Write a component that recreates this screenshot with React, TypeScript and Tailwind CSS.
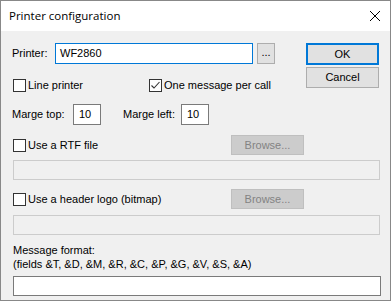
import { type ReactNode } from "react";

const bodyFont = { fontFamily: '"Liberation Sans", Arial, sans-serif' };
const titleFont = { fontFamily: '"Open Sans", "Noto Sans", sans-serif' };

function CheckBox({ checked, label }: { checked?: boolean; label: string }) {
  return (
    <label className="flex items-center h-[13px]">
      <span className="w-[13px] h-[13px] border border-[#333333] bg-white flex items-center justify-center shrink-0">
        {checked && (
          <svg width="11" height="11" viewBox="0 0 11 11">
            <path d="M1.5 5.5 L4 8 L9.5 2" fill="none" stroke="#333333" strokeWidth="1.1" />
          </svg>
        )}
      </span>
      <span className="ml-[2px] leading-none">{label}</span>
    </label>
  );
}

function Button({ children, variant }: { children: ReactNode; variant?: "default" | "disabled" }) {
  if (variant === "disabled") {
    return (
      <div className="w-[73px] h-[20px] bg-[#cccccc] border border-[#bfbfbf] text-[#838383] flex items-center justify-center">
        {children}
      </div>
    );
  }
  if (variant === "default") {
    return (
      <div className="w-[73px] h-[22px] bg-[#e1e1e1] border-2 border-[#0078d7] flex items-center justify-center">
        {children}
      </div>
    );
  }
  return (
    <div className="w-[73px] h-[21px] bg-[#e1e1e1] border border-[#adadad] flex items-center justify-center">
      {children}
    </div>
  );
}

export default function App() {
  return (
    <div
      className="w-[391px] h-[301px] border border-[#888888] flex flex-col text-[11px] text-black bg-[#f0f0f0]"
      style={bodyFont}
    >
      <div
        className="h-[30px] bg-white flex items-center justify-between pl-[8px] pr-[9px] shrink-0 text-[11.5px]"
        style={titleFont}
      >
        <span>Printer configuration</span>
        <svg width="12" height="12" viewBox="0 0 12 12">
          <path d="M1 1 L11 11 M11 1 L1 11" stroke="#000" strokeWidth="1" fill="none" />
        </svg>
      </div>

      <div className="flex-1 pl-[11px] pr-[11px]">
        <div className="flex mt-[12px]">
          <div className="flex flex-col">
            <div className="flex items-center h-[21px]">
              <span className="w-[43px]">Printer:</span>
              <div className="w-[198px] h-[21px] bg-white border border-[#0078d7] flex items-center px-[4px]">
                WF2860
              </div>
              <div className="ml-[4px] w-[18px] h-[21px] bg-[#e1e1e1] border border-[#adadad] flex items-center justify-center pb-[2px]">
                ...
              </div>
            </div>
            <div className="flex items-center mt-[15px] pl-[1px]">
              <div className="w-[136px]">
                <CheckBox label="Line printer" />
              </div>
              <CheckBox checked label="One message per call" />
            </div>
            <div className="flex items-center mt-[12px] h-[21px]">
              <span className="w-[61px]">Marge top:</span>
              <div className="w-[28px] h-[21px] bg-white border border-[#7a7a7a] flex items-center px-[5px]">10</div>
              <span className="ml-[22px] w-[58px]">Marge left:</span>
              <div className="w-[28px] h-[21px] bg-white border border-[#7a7a7a] flex items-center px-[5px]">10</div>
            </div>
          </div>
          <div className="ml-auto flex flex-col gap-[2px]">
            <Button variant="default">OK</Button>
            <Button>Cancel</Button>
          </div>
        </div>

        <div className="flex items-center mt-[10px] pl-[1px]">
          <div className="w-[218px]">
            <CheckBox label="Use a RTF file" />
          </div>
          <Button variant="disabled">Browse...</Button>
        </div>
        <div className="mt-[5px] ml-[1px] w-[367px] h-[20px] border border-[#cccccc]"></div>

        <div className="flex items-center mt-[9px] pl-[1px]">
          <div className="w-[218px]">
            <CheckBox label="Use a header logo (bitmap)" />
          </div>
          <Button variant="disabled">Browse...</Button>
        </div>
        <div className="mt-[6px] ml-[1px] w-[367px] h-[20px] border border-[#cccccc]"></div>

        <div className="mt-[8px] ml-[1px] leading-[14px]">
          <div>Message format:</div>
          <div>(fields &amp;T, &amp;D, &amp;M, &amp;R, &amp;C, &amp;P, &amp;G, &amp;V, &amp;S, &amp;A)</div>
        </div>
        <div className="mt-[5px] ml-[1px] w-[368px] h-[20px] bg-white border border-[#7a7a7a]"></div>
      </div>
    </div>
  );
}
